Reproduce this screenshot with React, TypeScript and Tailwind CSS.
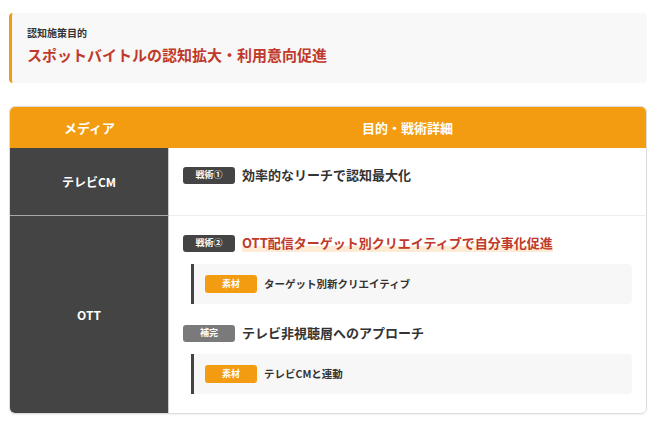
import React from 'react';

const FONT = '"Noto Sans CJK JP", "Noto Sans", sans-serif';

type Material = { label: string };
type Strategy = { badge: string; kind: 'main' | 'sub'; title: string; accent?: boolean; materials: Material[] };

const ROWS: { media: string; strategies: Strategy[] }[] = [
  {
    media: 'テレビCM',
    strategies: [{ badge: '戦術①', kind: 'main', title: '効率的なリーチで認知最大化', materials: [] }],
  },
  {
    media: 'OTT',
    strategies: [
      {
        badge: '戦術②',
        kind: 'main',
        title: 'OTT配信ターゲット別クリエイティブで自分事化促進',
        accent: true,
        materials: [{ label: 'ターゲット別新クリエイティブ' }],
      },
      { badge: '補完', kind: 'sub', title: 'テレビ非視聴層へのアプローチ', materials: [{ label: 'テレビCMと連動' }] },
    ],
  },
];

const StrategyBlock: React.FC<{ s: Strategy }> = ({ s }) => (
  <div>
    <div className="flex items-center gap-[7px] mb-3 h-[18px]">
      <span
        className={`w-[52px] h-[17px] rounded-[3px] flex items-center justify-center text-[9px] font-bold text-white ${
          s.kind === 'main' ? 'bg-[#444444]' : 'bg-[#7a7a7a]'
        }`}
      >
        {s.badge}
      </span>
      {s.accent ? (
        <span
          className="text-[13px] font-bold text-[#c0392b] leading-[18px]"
          style={{ backgroundImage: 'linear-gradient(transparent 65%, #fdebd6 65%)' }}
        >
          {s.title}
        </span>
      ) : (
        <span className="text-[13px] font-bold text-[#333333] leading-[18px]">{s.title}</span>
      )}
    </div>
    {s.materials.map((m) => (
      <div
        key={m.label}
        className="ml-2 h-[40px] flex items-center gap-[7px] pl-[11px] bg-[#f7f7f7] border-l-[3px] border-[#444444] rounded-r-[4px]"
      >
        <span className="w-[52px] h-[18px] rounded-[3px] bg-[#f39c12] flex items-center justify-center text-[9px] font-bold text-white">
          素材
        </span>
        <span className="text-[10.5px] font-bold text-[#333333]">{m.label}</span>
      </div>
    ))}
  </div>
);

export default function App() {
  return (
    <div className="w-[656px] h-[424px] bg-white px-[9px] pt-[13px]" style={{ fontFamily: FONT }}>
      <div className="h-[70px] bg-[#f8f8f8] border-l-[3px] border-[#f39c12] rounded-[4px] pl-[15px] pt-[13px]">
        <div className="text-[10px] font-bold text-[#333333] leading-[14px]">認知施策目的</div>
        <div className="text-[15px] font-bold text-[#c0392b] leading-[20px] mt-[5px]">
          スポットバイトルの認知拡大・利用意向促進
        </div>
      </div>

      <div className="mt-[23px] border border-[#dddddd] rounded-[6px] overflow-hidden shadow-[0_1px_2px_rgba(0,0,0,0.06)]">
        <div className="flex h-[41px] bg-[#f39c12] text-white text-[13px] font-bold">
          <div className="w-[159px] flex items-center justify-center">メディア</div>
          <div className="flex-1 flex items-center justify-center">目的・戦術詳細</div>
        </div>
        {ROWS.map((row, i) => (
          <div key={row.media} className={`flex ${i > 0 ? 'border-t border-[#eeeeee]' : ''}`}>
            <div
              className={`w-[159px] shrink-0 bg-[#444444] border-r border-[#cccccc] flex items-center justify-center text-[12px] font-bold text-white ${
                i > 0 ? 'border-t border-t-[#a8a8a8] -mt-px' : ''
              }`}
            >
              {row.media}
            </div>
            <div className="flex-1 pl-[14px] pr-[14px] pt-[18px] pb-[19px] flex flex-col gap-5">
              {row.strategies.map((s) => (
                <StrategyBlock key={s.badge} s={s} />
              ))}
            </div>
          </div>
        ))}
      </div>
    </div>
  );
}
